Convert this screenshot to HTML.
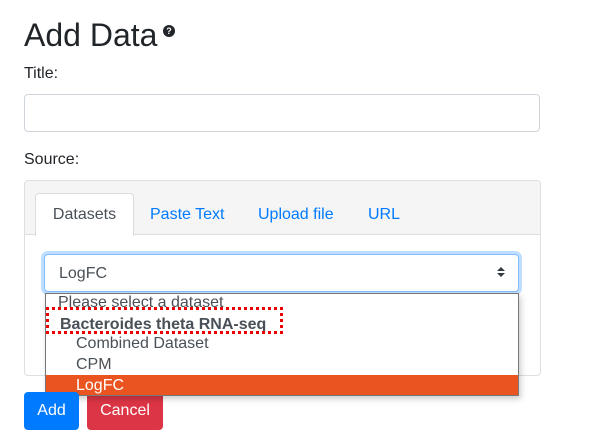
<!DOCTYPE html>
<html><head><style>
body{margin:0;width:593px;height:442px;background:#fff;font-family:"Liberation Sans",sans-serif;color:#212529;position:relative;overflow:hidden}
.a{position:absolute}
</style></head><body>
<div class="a" style="left:24px;top:15px;font-size:32px;line-height:40px">Add Data</div>
<div class="a" style="left:163px;top:25px;width:12px;height:12px;border-radius:50%;background:#212529;color:#fff;font-size:9px;font-weight:bold;text-align:center;line-height:12px">?</div>
<div class="a" style="left:24px;top:65px;font-size:16px">Title:</div>
<div class="a" style="left:24px;top:94px;width:514px;height:36px;border:1px solid #ced4da;border-radius:4px"></div>
<div class="a" style="left:24px;top:151px;font-size:16px">Source:</div>
<div class="a" style="left:24px;top:180px;width:515px;height:194px;border:1px solid #dfdfdf;border-radius:4px;overflow:hidden">
 <div class="a" style="left:0;top:0;width:515px;height:53px;background:#f5f5f5;border-bottom:1px solid #ddd"></div>
 <div class="a" style="left:10px;top:12px;width:97px;height:42px;background:#fff;border:1px solid #ddd;border-bottom:none;border-radius:4px 4px 0 0;font-size:16px;color:#495057;text-align:center;line-height:42px">Datasets</div>
 <div class="a" style="left:125px;top:25px;font-size:16px;color:#007bff">Paste Text</div>
 <div class="a" style="left:233px;top:25px;font-size:16px;color:#007bff">Upload file</div>
 <div class="a" style="left:343px;top:25px;font-size:16px;color:#007bff">URL</div>
</div>
<div class="a" style="left:44px;top:254px;width:473px;height:36px;border:1px solid #80bdff;border-radius:4px;box-shadow:0 0 0 3px rgba(0,123,255,.25);background:#fff"></div>
<div class="a" style="left:59px;top:265px;font-size:16px;color:#495057">LogFC</div>
<div class="a" style="left:497px;top:267px;width:0;height:0;border-left:4px solid transparent;border-right:4px solid transparent;border-bottom:4px solid #343a40"></div>
<div class="a" style="left:497px;top:273px;width:0;height:0;border-left:4px solid transparent;border-right:4px solid transparent;border-top:4px solid #343a40"></div>
<div class="a" style="left:45px;top:293px;width:472px;height:101px;border:1px solid #777;background:#fff;box-shadow:2px 3px 6px rgba(0,0,0,.2);font-size:16px;color:#495057">
 <div class="a" style="left:12px;top:0;line-height:18px">Please select a dataset</div>
 <div class="a" style="left:14px;top:21px;line-height:20px;font-weight:bold">Bacteroides theta RNA-seq</div>
 <div class="a" style="left:30px;top:40px;line-height:20px">Combined Dataset</div>
 <div class="a" style="left:30px;top:61px;line-height:20px">CPM</div>
 <div class="a" style="left:0;top:81px;width:472px;height:20px;background:#e95420;color:#fff"><span style="position:absolute;left:30px;line-height:20px;top:1px">LogFC</span></div>
</div>
<div class="a" style="left:46px;top:307px;width:237px;height:27px;border:3px dotted #e00;box-sizing:border-box"></div>
<div class="a" style="left:24px;top:392px;width:55px;height:38px;background:#007bff;border-radius:4px;color:#fff;font-size:16px;text-align:center;line-height:38px">Add</div>
<div class="a" style="left:87px;top:392px;width:76px;height:38px;background:#dc3545;border-radius:4px;color:#fff;font-size:16px;text-align:center;line-height:38px;z-index:-1">Cancel</div>
</body></html>
